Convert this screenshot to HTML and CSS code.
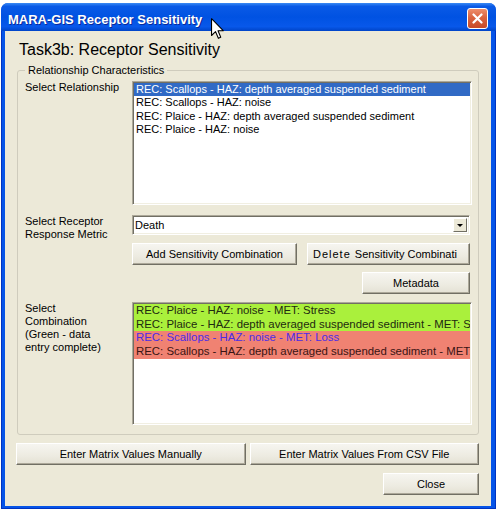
FILE: index.html
```html
<!DOCTYPE html>
<html lang="en">
<head>
    <meta charset="UTF-8">
    <title>MARA-GIS Receptor Sensitivity</title>
    <link rel="stylesheet" href="styles.css">
</head>
<body>
    <div class="window">
        <div class="titlebar">
            <span class="title">MARA-GIS Receptor Sensitivity</span>
            <button type="button" class="close-btn" aria-label="Close">
                <svg width="11" height="11" viewBox="0 0 11 11" aria-hidden="true">
                    <path d="M1.5 1.5 L9.5 9.5 M9.5 1.5 L1.5 9.5" stroke="#fff" stroke-width="2.2" stroke-linecap="round"/>
                </svg>
            </button>
        </div>
        <div class="frame">
            <div class="client">
                <h1 class="task-title">Task3b: Receptor Sensitivity</h1>

                <fieldset class="group">
                    <legend>Relationship Characteristics</legend>

                    <div class="field-row">
                        <span class="field-label">Select Relationship</span>
                        <ul class="listbox relationship-list" role="listbox">
                            <li class="selected" role="option">REC: Scallops - HAZ: depth averaged suspended sediment</li>
                            <li role="option">REC: Scallops - HAZ: noise</li>
                            <li role="option">REC: Plaice - HAZ: depth averaged suspended sediment</li>
                            <li role="option">REC: Plaice - HAZ: noise</li>
                        </ul>
                    </div>

                    <div class="field-row row-metric">
                        <span class="field-label">Select Receptor<br>Response Metric</span>
                        <div class="combo">
                            <span class="combo-value">Death</span>
                            <span class="combo-arrow"><span class="triangle"></span></span>
                        </div>
                    </div>

                    <div class="field-row row-actions">
                        <span></span>
                        <div class="button-row">
                            <button type="button" class="btn btn-add">Add Sensitivity Combination</button>
                            <button type="button" class="btn btn-delete"><span class="spaced">Delete </span>Sensitivity Combinati</button>
                        </div>
                    </div>

                    <div class="field-row row-meta">
                        <span></span>
                        <div class="meta-row">
                            <button type="button" class="btn btn-metadata">Metadata</button>
                        </div>
                    </div>

                    <div class="field-row row-combination">
                        <span class="field-label">Select<br>Combination<br>(Green - data<br>entry complete)</span>
                        <ul class="listbox combination-list" role="listbox">
                            <li class="done" role="option">REC: Plaice - HAZ: noise - MET: Stress</li>
                            <li class="done" role="option">REC: Plaice - HAZ: depth averaged suspended sediment - MET: Stress</li>
                            <li class="todo blue" role="option">REC: Scallops - HAZ: noise - MET: Loss</li>
                            <li class="todo" role="option">REC: Scallops - HAZ: depth averaged suspended sediment - MET: Loss</li>
                        </ul>
                    </div>
                </fieldset>

                <div class="matrix-row">
                    <button type="button" class="btn">Enter Matrix Values Manually</button>
                    <button type="button" class="btn">Enter Matrix Values From CSV File</button>
                </div>

                <div class="close-row">
                    <button type="button" class="btn btn-close">Close</button>
                </div>
            </div>
        </div>
    </div>

    <!-- mouse pointer sitting over the title bar -->
    <svg class="cursor" width="13" height="22" viewBox="0 0 12 20" aria-hidden="true">
        <path d="M0.5 0.5 L0.5 16 L4.2 12.4 L6.8 18.6 L9 17.6 L6.5 11.6 L11.3 11.6 Z" fill="#fff" stroke="#000" stroke-width="1" stroke-linejoin="round"/>
    </svg>
</body>
</html>
```

FILE: styles.css
```css
body {
    margin: 0;
    background: #fff;
    font-family: "Liberation Sans", Arial, sans-serif;
    font-size: 11px;
    color: #000;
}

.window {
    width: 495px;
    margin: 3px 0 0 1px;
    background: #0A4FE0;
    border-radius: 7px 7px 0 0;
}

/* Title bar */
.titlebar {
    height: 28px;
    box-sizing: border-box;
    display: flex;
    justify-content: space-between;
    align-items: flex-start;
    padding: 5px 8px 0 7px;
    border-radius: 7px 7px 0 0;
    background: linear-gradient(180deg, #3A8AF4 0%, #0A5AE6 12%, #0052E2 50%, #0858EA 84%, #0044C8 100%);
}

.title {
    margin-top: 4px;
    font-weight: bold;
    font-size: 13px;
    line-height: 16px;
    color: #fff;
    text-shadow: 1px 1px #0B2A9A;
}

.close-btn {
    width: 21px;
    height: 21px;
    padding: 0;
    display: flex;
    align-items: center;
    justify-content: center;
    border: 1px solid #fff;
    border-radius: 3px;
    background: linear-gradient(180deg, #EE8E6C 0%, #DA6440 45%, #C84A28 100%);
}

/* Window body */
.frame {
    padding: 0 5px 3px 4px;
    background: #0554E8;
    box-shadow: inset 1px 0 #0033C0, inset -1px 0 #0033C0, inset 0 -1px #0033C0;
}

.client {
    height: 475px;
    box-sizing: border-box;
    padding-top: 10px;
    background: #ECE9D8;
}

.task-title {
    margin: 0 0 0 14px;
    font-size: 16px;
    font-weight: normal;
    line-height: 18px;
}

/* Group box */
.group {
    margin: 5px 12px 0;
    padding: 4px 6px 9px 7px;
    border: 1px solid #CFCCBD;
    border-radius: 3px;
    min-width: 0;
}

.group legend {
    padding: 0 3px;
    line-height: 13px;
}

.field-row {
    display: grid;
    grid-template-columns: 107px 340px;
}

.field-label {
    line-height: 13px;
}

.row-metric {
    margin-top: 10px;
    grid-template-rows: 20px;
}

.row-actions {
    margin-top: 8px;
}

.row-meta {
    margin-top: 7px;
}

.row-combination {
    margin-top: 8px;
}

/* List boxes */
.listbox {
    list-style: none;
    margin: 0;
    padding: 1px;
    box-sizing: border-box;
    overflow: hidden;
    background: #fff;
    border: 1px solid;
    border-color: #ACA899 #fff #fff #ACA899;
    box-shadow: inset 1px 1px #716F64, inset -1px -1px #F1EFE2;
}

.listbox li {
    padding-left: 2px;
    white-space: nowrap;
    overflow: hidden;
}

.relationship-list {
    height: 124px;
}

.relationship-list li {
    height: 13.33px;
    line-height: 13.33px;
}

.relationship-list li.selected {
    background: #316AC5;
    color: #fff;
}

.combination-list {
    height: 123px;
}

.combination-list li {
    height: 13.7px;
    line-height: 13.7px;
    font-size: 11.4px;
}

.done {
    background: #AAF03C;
    color: #1E2A10;
}

.todo {
    background: #F08272;
    color: #3A1414;
}

.blue {
    color: #4A2CE6;
}

/* Drop-down */
.combo {
    width: 338px;
    height: 20px;
    box-sizing: border-box;
    display: flex;
    align-items: center;
    background: #fff;
    border: 1px solid;
    border-color: #ACA899 #fff #fff #ACA899;
    box-shadow: inset 1px 1px #716F64, inset -1px -1px #F1EFE2;
}

.combo-value {
    flex: 1;
    padding-left: 2px;
}

.combo-arrow {
    width: 14px;
    height: 14px;
    margin-right: 2px;
    display: flex;
    align-items: center;
    justify-content: center;
    background: #ECE9D8;
    border: 1px solid;
    border-color: #fff #716F64 #716F64 #fff;
    box-sizing: border-box;
}

.triangle {
    width: 0;
    height: 0;
    border-left: 3px solid transparent;
    border-right: 3px solid transparent;
    border-top: 3px solid #000;
}

/* Buttons */
.btn {
    height: 22px;
    padding: 0;
    font-family: "Liberation Sans", Arial, sans-serif;
    font-size: 11px;
    color: #000;
    background: linear-gradient(180deg, #F6F5F0 0%, #EDEBE1 60%, #E4E1D4 100%);
    border: 1px solid;
    border-color: #fff #716F64 #716F64 #fff;
    box-shadow: inset -1px -1px #ACA899;
    white-space: nowrap;
    overflow: hidden;
}

.button-row {
    display: flex;
    gap: 10px;
    width: 338px;
}

.btn-add {
    width: 165px;
}

.btn-delete {
    width: 163px;
    text-align: left;
    padding-left: 5px;
}

.spaced {
    letter-spacing: 1px;
}

.meta-row {
    width: 338px;
    display: flex;
    justify-content: flex-end;
}

.btn-metadata {
    width: 108px;
}

.matrix-row {
    display: flex;
    gap: 4px;
    margin: 8px 12px 0 11px;
}

.matrix-row .btn {
    flex: 1;
}

.close-row {
    display: flex;
    justify-content: flex-end;
    margin: 8px 12px 0;
}

.btn-close {
    width: 96px;
}

.cursor {
    position: absolute;
    left: 211px;
    top: 18px;
}
```
